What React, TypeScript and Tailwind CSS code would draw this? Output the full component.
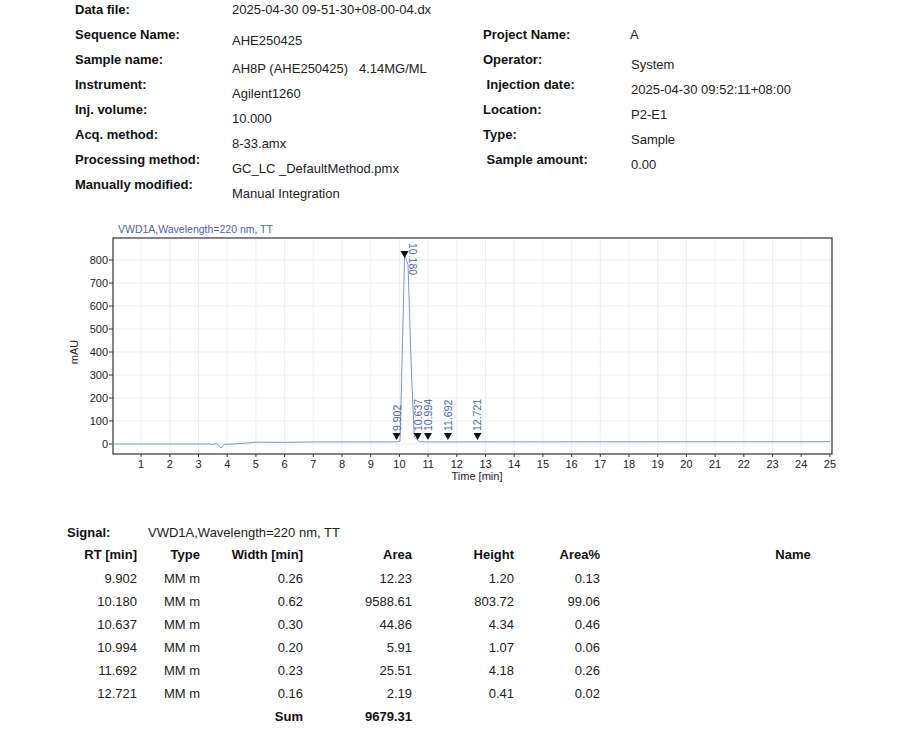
const L = "text-[13px] font-bold text-[#111]"
const V = "text-[13px] text-[#222]"

const x = (t: number) => 112.4 + 28.7 * t
const y = (v: number) => 444 - v * 0.23

const peaks = [
  { rt: 9.902, top: false },
  { rt: 10.18, top: true },
  { rt: 10.637, top: false },
  { rt: 10.994, top: false },
  { rt: 11.692, top: false },
  { rt: 12.721, top: false },
]

const rows = [
  ["9.902", "0.26", "12.23", "1.20", "0.13"],
  ["10.180", "0.62", "9588.61", "803.72", "99.06"],
  ["10.637", "0.30", "44.86", "4.34", "0.46"],
  ["10.994", "0.20", "5.91", "1.07", "0.06"],
  ["11.692", "0.23", "25.51", "4.18", "0.26"],
  ["12.721", "0.16", "2.19", "0.41", "0.02"],
]

function Chart() {
  const trace = [
    [0, 0], [3.4, 0], [3.5, -2], [3.6, 2], [3.7, -3], [3.78, -18], [3.9, -2], [4.2, 0], [4.6, 3],
    [5, 8], [6, 7], [7, 9], [9.9, 9], [10.02, 12], [10.1, 400], [10.18, 825], [10.3, 780],
    [10.42, 300], [10.52, 30], [10.7, 10], [11, 9], [25, 10],
  ]
  const d = trace.map(([t, v], i) => `${i ? "L" : "M"}${x(t).toFixed(1)},${y(v).toFixed(1)}`).join(" ")
  return (
    <svg width="790" height="270" viewBox="60 215 790 270" className="block" style={{ fontFamily: "Liberation Sans, Arial, sans-serif" }}>
      <text x="118" y="233" fontSize="10.5" fill="#4a63b8">VWD1A,Wavelength=220 nm, TT</text>
      {[0, 100, 200, 300, 400, 500, 600, 700, 800].map((v) => (
        <g key={v}>
          <line x1="113" x2="832" y1={y(v)} y2={y(v)} stroke="#e6e6ec" strokeWidth="0.6" />
          <line x1="109" x2="113" y1={y(v)} y2={y(v)} stroke="#333" />
          <text x="108" y={y(v) + 4} fontSize="11" textAnchor="end" fill="#222">{v}</text>
        </g>
      ))}
      {Array.from({ length: 25 }, (_, i) => i + 1).map((t) => (
        <g key={t}>
          <line x1={x(t)} x2={x(t)} y1="238" y2="454" stroke="#e6e6ec" strokeWidth="0.6" />
          <line x1={x(t)} x2={x(t)} y1="454" y2="457" stroke="#333" />
          <text x={x(t)} y="468" fontSize="11" textAnchor="middle" fill="#222">{t}</text>
        </g>
      ))}
      <rect x="113" y="238" width="719" height="216" fill="none" stroke="#333" strokeWidth="1.2" />
      <text x="78" y="352" fontSize="11" textAnchor="middle" fill="#222" transform="rotate(-90 78 352)">mAU</text>
      <text x="477" y="480" fontSize="11" textAnchor="middle" fill="#222">Time [min]</text>
      <path d={d} fill="none" stroke="#7f93d6" strokeWidth="1" />
      {peaks.map((p) => {
        const px = x(p.rt)
        const ty = p.top ? 251 : 433
        const ly = p.top ? 243 : 431
        return (
          <g key={p.rt}>
            <path d={`M${px - 4},${ty} L${px + 4},${ty} L${px},${ty + 7} Z`} fill="#111" />
            <text
              x={px + 4}
              y={ly}
              fontSize="10.5"
              fill="#4a63b8"
              transform={`rotate(${p.top ? 90 : -90} ${px + 4} ${ly})`}
            >
              {p.rt.toFixed(3)}
            </text>
          </g>
        )
      })}
    </svg>
  )
}

export default function App() {
  return (
    <div className="h-[754px] w-[900px] bg-white" style={{ fontFamily: "Liberation Sans, Arial, sans-serif" }}>
      <div className="flex pt-[2px]">
        <div className="ml-[75px] flex w-[157px] flex-col">
          {["Data file:", "Sequence Name:", "Sample name:", "Instrument:", "Inj. volume:", "Acq. method:", "Processing method:", "Manually modified:"].map((l) => (
            <div key={l} className={`${L} h-[25px] leading-[16px]`}>{l}</div>
          ))}
        </div>
        <div className="flex w-[251px] flex-col">
          <div className={`${V} h-[25px] leading-[16px]`}>2025-04-30 09-51-30+08-00-04.dx</div>
          {["AHE250425", "AH8P (AHE250425)   4.14MG/ML", "Agilent1260", "10.000", "8-33.amx", "GC_LC _DefaultMethod.pmx", "Manual Integration"].map((v, i) => (
            <div key={v} className={`${V} h-[25px] whitespace-pre leading-[16px] ${i === 0 ? "mt-[6px] h-[28px]" : ""}`}>{v}</div>
          ))}
        </div>
        <div className="flex w-[147px] flex-col pt-[25px]">
          {["Project Name:", "Operator:", " Injection date:", "Location:", "Type:", " Sample amount:"].map((l) => (
            <div key={l} className={`${L} h-[25px] whitespace-pre leading-[16px]`}>{l}</div>
          ))}
        </div>
        <div className="flex flex-col pt-[25px]">
          {["A", "System", "2025-04-30 09:52:11+08:00", "P2-E1", "Sample", "0.00"].map((v, i) => (
            <div key={v} className={`${V} h-[25px] leading-[16px] ${i === 1 ? "mt-[5px]" : ""} ${i === 0 ? "" : "ml-[1px]"}`}>{v}</div>
          ))}
        </div>
      </div>

      <div className="ml-[60px] mt-[4px]">
        <Chart />
      </div>

      <div className="ml-[67px] mt-[38px] text-[13px] text-[#222]">
        <div className="flex h-[20px] items-center">
          <span className="w-[81px] font-bold text-[#111]">Signal:</span>
          <span>VWD1A,Wavelength=220 nm, TT</span>
        </div>
        <div className="grid grid-cols-[70px_63px_103px_109px_102px_86px_1fr] font-bold text-[#111]">
          <div className="h-[23px] text-right leading-[24px]">RT [min]</div>
          <div className="text-right leading-[24px]">Type</div>
          <div className="text-right leading-[24px]">Width [min]</div>
          <div className="text-right leading-[24px]">Area</div>
          <div className="text-right leading-[24px]">Height</div>
          <div className="text-right leading-[24px]">Area%</div>
          <div className="pl-[86px] text-center leading-[24px]">Name</div>
        </div>
        {rows.map((r) => (
          <div key={r[0]} className="grid h-[23px] grid-cols-[70px_63px_103px_109px_102px_86px] items-center">
            <div className="text-right">{r[0]}</div>
            <div className="text-right">MM m</div>
            <div className="text-right">{r[1]}</div>
            <div className="text-right">{r[2]}</div>
            <div className="text-right">{r[3]}</div>
            <div className="text-right">{r[4]}</div>
          </div>
        ))}
        <div className="grid h-[23px] grid-cols-[70px_63px_103px_109px] items-center font-bold text-[#111]">
          <div />
          <div />
          <div className="text-right">Sum</div>
          <div className="text-right">9679.31</div>
        </div>
      </div>
    </div>
  )
}
